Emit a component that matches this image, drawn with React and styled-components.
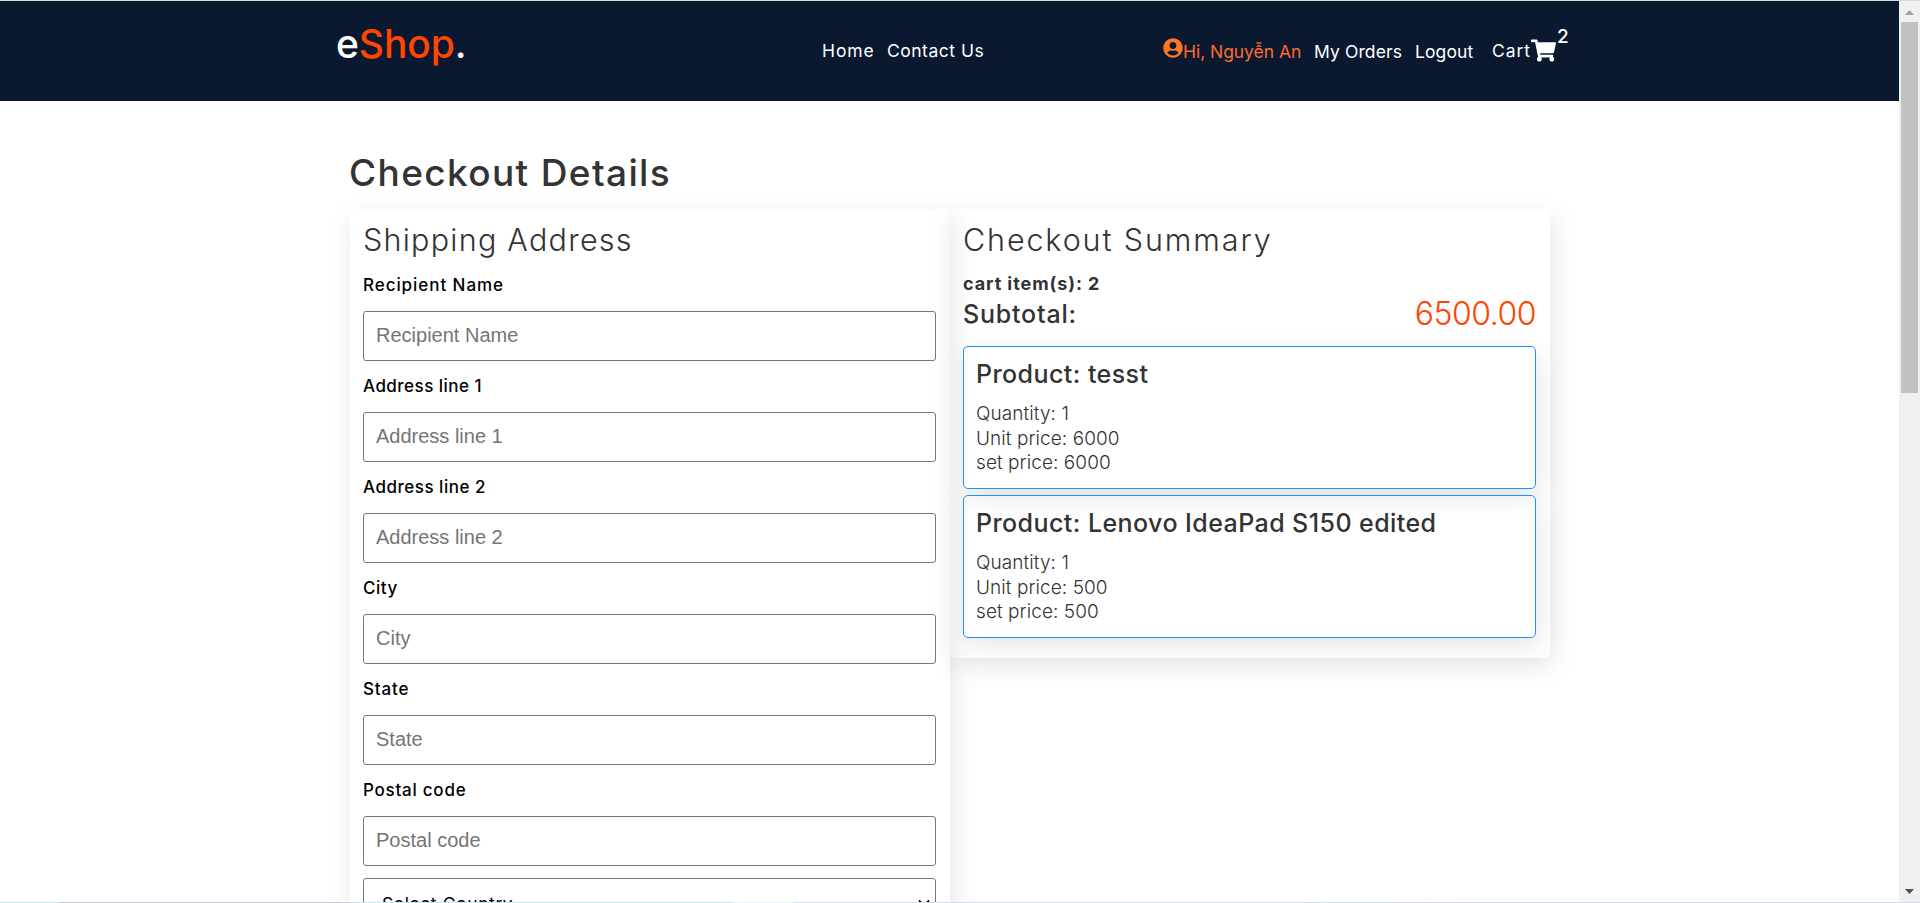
import React from "react";
import styled, { createGlobalStyle } from "styled-components";
import { FaUserCircle, FaShoppingCart } from "react-icons/fa";

const GlobalStyle = createGlobalStyle`
  * { margin: 0; padding: 0; box-sizing: border-box; }
  body { background: #fff; font-family: Inter, "Noto Sans", sans-serif; overflow: hidden; }
`;

const Frame = styled.div`
  display: flex;
  flex-direction: column;
  height: 903px;
  overflow: hidden;
`;
const TopEdge = styled.div`
  flex: 0 0 1px;
  background: #d3ddd6;
`;
const BottomEdge = styled.div`
  flex: 0 0 1px;
  background: linear-gradient(
    90deg,
    #cfe3ea 0 60px,
    #c9c9cd 60px 330px,
    #cfe3ea 360px 732px,
    #e4f1f3 732px 793px,
    #cfe0ea 793px 1300px,
    #d8d9e6 1500px
  );
`;
const Viewport = styled.div`
  display: flex;
  flex: 0 0 901px;
  overflow: hidden;
`;
const Page = styled.div`
  flex: 1;
  height: 901px;
  overflow: hidden;
`;

const Header = styled.header`
  display: flex;
  align-items: center;
  height: 100px;
  padding-left: 336px;
  background: #0a1930;
  color: #fff;
`;
const Logo = styled.div`
  width: 486px;
  padding-bottom: 14px;
  font-size: 39px;
  line-height: 50px;
  font-weight: 500;
  letter-spacing: -0.1px;
  white-space: nowrap;
`;
const LogoAccent = styled.span`
  color: #ff4500;
`;
const NavLinks = styled.nav`
  display: flex;
  align-items: center;
  width: ${(p) => p.$width}px;
`;
const NavLink = styled.a`
  display: flex;
  align-items: center;
  width: ${(p) => p.$width}px;
  padding-top: ${(p) => p.$drop || 0}px;
  font-size: 17.5px;
  line-height: 24px;
  letter-spacing: ${(p) => p.$spacing || 0}px;
  color: ${(p) => (p.$accent ? "#ff7722" : "#fff")};
  white-space: nowrap;
`;
const UserName = styled.span`
  color: #ff6a2b;
`;
const UserIcon = styled(FaUserCircle)`
  flex: none;
  width: 20px;
  height: 20px;
  margin: 0 0 7px 0;
`;
const CartIcon = styled(FaShoppingCart)`
  flex: none;
  width: 25px;
  height: 23px;
  margin-bottom: 1px;
`;
const CartCount = styled.span`
  padding: 0 0 29px 1px;
  font-size: 19px;
  line-height: 20px;
  font-weight: 500;
`;

const Main = styled.main`
  width: 1200px;
  margin: 0 0 0 350px;
  padding-top: 44px;
`;
const PageTitle = styled.h2`
  height: 56px;
  margin: 0 0 8px -1px;
  font-size: 37px;
  line-height: 56px;
  font-weight: 500;
  letter-spacing: 1.37px;
  color: #333;
`;
const Columns = styled.div`
  display: flex;
  align-items: flex-start;
`;
const Card = styled.section`
  width: 600px;
  height: ${(p) => p.$height}px;
  padding: 10px 14px 0 13px;
  border-radius: 5px;
  box-shadow: 3px 8px 26px rgba(0, 0, 0, 0.1);
`;
const CardTitle = styled.h3`
  font-size: 30.5px;
  line-height: 41px;
  font-weight: 300;
  letter-spacing: ${(p) => p.$spacing}px;
  color: #333;
`;
const Field = styled.div`
  padding-top: 13px;
`;
const Label = styled.label`
  display: block;
  margin-bottom: 14px;
  font-size: 17px;
  line-height: 24px;
  font-weight: 500;
  letter-spacing: ${(p) => p.$spacing}px;
  color: #000;
`;
const Input = styled.input`
  display: block;
  width: 573px;
  height: 50px;
  padding: 0 12px 2px;
  border: 1px solid #777;
  border-radius: 3px;
  background: #fff;
  font: 20px "Liberation Sans", sans-serif;
  &::placeholder { color: #757575; opacity: 1; }
`;
const Select = styled.div`
  display: flex;
  align-items: center;
  justify-content: space-between;
  height: 50px;
  margin-top: 12px;
  padding: 0 5px 0 18px;
  border: 1px solid #777;
  border-radius: 3px;
  font-size: 17.5px;
  letter-spacing: 0.6px;
`;
const Chevron = styled.svg`
  width: 12px;
  height: 8px;
`;

const CartItems = styled.p`
  margin-top: 12px;
  font-size: 18px;
  line-height: 23px;
  font-weight: 700;
  letter-spacing: 0.92px;
  color: #333;
`;
const SubtotalRow = styled.div`
  display: flex;
  align-items: center;
  justify-content: space-between;
  height: 37px;
  margin-bottom: 14px;
`;
const Subtotal = styled.h4`
  font-size: 25px;
  font-weight: 500;
  letter-spacing: 0.8px;
  color: #333;
`;
const Total = styled.span`
  font-size: 32px;
  font-weight: 300;
  letter-spacing: -0.5px;
  color: #ff4500;
`;
const Product = styled.article`
  width: 573px;
  height: 143px;
  margin-bottom: 6px;
  padding: 10px 12px;
  border: 1px solid #1e90ff;
  border-radius: 5px;
  box-shadow: 3px 8px 26px rgba(0, 0, 0, 0.1);
  color: #333;
`;
const ProductName = styled.h4`
  margin-bottom: 11px;
  font-size: 25px;
  line-height: 34px;
  font-weight: 500;
  letter-spacing: 0.43px;
  white-space: nowrap;
`;
const ProductLine = styled.p`
  font-size: 19px;
  line-height: 24.5px;
  font-weight: 300;
  letter-spacing: 0.07px;
`;

const Scrollbar = styled.div`
  display: flex;
  flex-direction: column;
  align-items: center;
  flex: 0 0 21px;
  height: 901px;
  background: #f0f0f0;
`;
const Arrow = styled.svg`
  flex: none;
  width: 9px;
  height: 5px;
  margin: ${(p) => p.$margin};
  fill: ${(p) => p.$color};
`;
const Thumb = styled.div`
  width: 17px;
  height: 371px;
  background: #c1c1c1;
`;

const fields = [
  ["Recipient Name", 0.94],
  ["Address line 1", 0.47],
  ["Address line 2", 0.51],
  ["City", 0.54],
  ["State", 0.84],
  ["Postal code", 0.75],
];
const products = [
  { name: "tesst", quantity: 1, price: 6000 },
  { name: "Lenovo IdeaPad S150 edited", quantity: 1, price: 500 },
];

export default function App() {
  return (
    <Frame>
      <GlobalStyle />
      <TopEdge />
      <Viewport>
        <Page>
          <Header>
            <Logo>
              e<LogoAccent>Shop</LogoAccent>.
            </Logo>
            <NavLinks $width={341}>
              <NavLink $width={65} $spacing={0.9}>Home</NavLink>
              <NavLink $width={100} $spacing={0.5}>Contact Us</NavLink>
            </NavLinks>
            <NavLinks>
              <NavLink $width={151} $accent $drop={1} $spacing={-0.05}>
                <UserIcon />
                <UserName>Hi, Nguyễn An</UserName>
              </NavLink>
              <NavLink $width={101} $drop={1} $spacing={0.1}>My Orders</NavLink>
              <NavLink $width={77} $drop={1} $spacing={0.1}>Logout</NavLink>
              <NavLink $width={39} $spacing={0.9}>Cart</NavLink>
              <CartIcon />
              <CartCount>2</CartCount>
            </NavLinks>
          </Header>
          <Main>
            <PageTitle>Checkout Details</PageTitle>
            <Columns>
              <Card $height={900}>
                <CardTitle $spacing={1.25}>Shipping Address</CardTitle>
                {fields.map(([name, spacing]) => (
                  <Field key={name}>
                    <Label $spacing={spacing}>{name}</Label>
                    <Input placeholder={name} />
                  </Field>
                ))}
                <Select>
                  Select Country
                  <Chevron viewBox="0 0 12 8">
                    <path d="M1 1.5 6 6.5 11 1.5" fill="none" stroke="#000" strokeWidth="1.8" />
                  </Chevron>
                </Select>
              </Card>
              <Card $height={449}>
                <CardTitle $spacing={1.87}>Checkout Summary</CardTitle>
                <CartItems>cart item(s): 2</CartItems>
                <SubtotalRow>
                  <Subtotal>Subtotal:</Subtotal>
                  <Total>6500.00</Total>
                </SubtotalRow>
                {products.map((p) => (
                  <Product key={p.name}>
                    <ProductName>Product: {p.name}</ProductName>
                    <ProductLine>Quantity: {p.quantity}</ProductLine>
                    <ProductLine>Unit price: {p.price}</ProductLine>
                    <ProductLine>set price: {p.price * p.quantity}</ProductLine>
                  </Product>
                ))}
              </Card>
            </Columns>
          </Main>
        </Page>
        <Scrollbar>
          <Arrow $margin="9px 0 7px" $color="#a3a3a3" viewBox="0 0 9 5">
            <path d="M4.5 0 9 5H0z" />
          </Arrow>
          <Thumb />
          <Arrow $margin="auto 0 8px" $color="#505050" viewBox="0 0 9 5">
            <path d="M0 0h9L4.5 5z" />
          </Arrow>
        </Scrollbar>
      </Viewport>
      <BottomEdge />
    </Frame>
  );
}
